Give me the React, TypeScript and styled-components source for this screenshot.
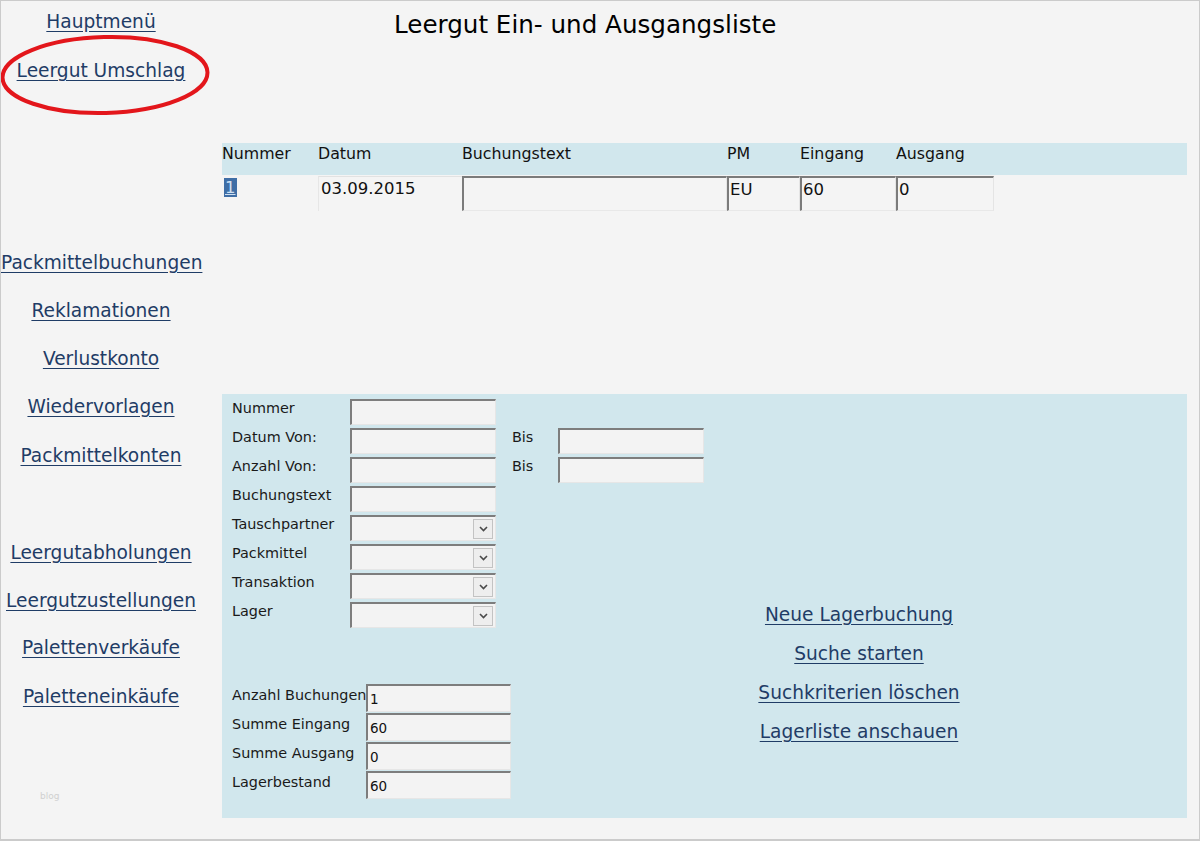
import styled, { createGlobalStyle } from "styled-components";

const GlobalStyle = createGlobalStyle`
    html, body {
        margin: 0;
        padding: 0;
        background: #f4f4f4;
    }
    body {
        font-family: "DejaVu Sans", Verdana, sans-serif;
        color: #111;
    }
`;

const Page = styled.div`
    position: relative;
    display: flex;
    width: 1200px;
    height: 841px;
    box-sizing: border-box;
    border: 1px solid #cbcbcb;
    border-bottom-width: 2px;
    background: #f4f4f4;
    overflow: hidden;
`;

const Nav = styled.nav`
    position: relative;
    display: flex;
    flex-direction: column;
    width: 200px;
    margin-right: 21px;
    padding-top: 10px;
`;

const NavLink = styled.a<{ $gap?: number }>`
    display: block;
    margin-top: ${(p) => p.$gap ?? 26}px;
    font-size: 18.6px;
    line-height: 22px;
    text-align: center;
    color: #1f3c66;
    text-decoration: underline;
    text-underline-offset: 3px;
    white-space: nowrap;
    cursor: pointer;
`;

const Circle = styled.svg`
    position: absolute;
    left: -1px;
    top: 33px;
    pointer-events: none;
`;

const Watermark = styled.div`
    position: absolute;
    left: 39px;
    top: 790px;
    font-size: 9px;
    color: #d0d0d0;
`;

const Main = styled.main`
    display: flex;
    flex-direction: column;
    width: 965px;
`;

const Title = styled.h1`
    margin: 9px 0 0 172px;
    font-size: 24.6px;
    line-height: 29px;
    font-weight: normal;
    color: #000;
`;

const Columns = "96px 144px 265px 73px 96px 98px";

const HeaderBand = styled.div`
    display: grid;
    grid-template-columns: ${Columns};
    height: 32px;
    margin-top: 104px;
    background: #d1e7ed;
`;

const HeadCell = styled.div`
    padding: 1px 0 0 0;
    font-size: 15.8px;
    line-height: 19px;
`;

const DataRow = styled.div`
    display: grid;
    grid-template-columns: ${Columns};
    height: 35px;
    margin-top: 1px;
`;

const Cell = styled.div<{ $variant: "plain" | "faint" | "inset" }>`
    box-sizing: border-box;
    padding: 2px 0 0 ${(p) => (p.$variant === "inset" ? 1 : 2)}px;
    font-size: 16.5px;
    line-height: 20px;
    background: #f4f4f4;
    border-top: ${(p) =>
        p.$variant === "inset" ? "2px solid #7b7b7b" : p.$variant === "faint" ? "1px solid #e2e2e2" : "none"};
    border-left: ${(p) =>
        p.$variant === "inset" ? "2px solid #7b7b7b" : p.$variant === "faint" ? "1px solid #e6e6e6" : "none"};
    border-right: ${(p) => (p.$variant === "inset" ? "1px solid #e4e4e4" : "none")};
    border-bottom: ${(p) => (p.$variant === "inset" ? "1px solid #e8e8e8" : "none")};
`;

const Selected = styled.span`
    background: #3f6ea6;
    color: #cfe0f2;
    text-decoration: underline;
    padding: 0 1px;
`;

const Panel = styled.section`
    display: flex;
    height: 424px;
    margin-top: 183px;
    background: #d1e7ed;
`;

const LeftCol = styled.div`
    width: 480px;
    padding: 5px 0 0 10px;
`;

const FormGrid = styled.div`
    display: grid;
    grid-template-columns: 118px 146px 62px 146px;
    grid-auto-rows: 26px;
    row-gap: 3px;
    align-items: start;
`;

const Label = styled.label<{ $indent?: number }>`
    padding: 1px 0 0 ${(p) => p.$indent ?? 0}px;
    font-size: 14.4px;
    line-height: 17px;
    white-space: nowrap;
    color: #1a1a1a;
`;

const Field = styled.input<{ $small?: boolean }>`
    box-sizing: border-box;
    width: 100%;
    height: 100%;
    margin: 0;
    padding: 0 0 0 2px;
    font-family: "DejaVu Sans", Verdana, sans-serif;
    font-size: ${(p) => (p.$small ? 13.5 : 14)}px;
    color: #111;
    background: #f3f3f3;
    border-style: solid;
    border-color: #7d7d7d #e6e6e6 #e6e6e6 #7d7d7d;
    border-width: 2px 1px 1px 2px;
    outline: none;
`;

const SelectBox = styled.div`
    box-sizing: border-box;
    display: flex;
    justify-content: flex-end;
    align-items: center;
    height: 100%;
    padding-right: 2px;
    background: #f3f3f3;
    border-style: solid;
    border-color: #7d7d7d #e6e6e6 #e6e6e6 #7d7d7d;
    border-width: 2px 1px 1px 2px;
`;

const ArrowBox = styled.div`
    display: flex;
    align-items: center;
    justify-content: center;
    width: 20px;
    height: 20px;
    box-sizing: border-box;
    background: #eeeeee;
    border: 1px solid #c3c3c3;
`;

const SummaryGrid = styled.div`
    display: grid;
    grid-template-columns: 134px 145px;
    grid-auto-rows: 28px;
    row-gap: 1px;
    margin-top: 56px;
    align-items: start;
`;

const SummaryLabel = styled(Label)`
    padding-top: 3px;
`;

const RightCol = styled.div`
    display: flex;
    flex-direction: column;
    align-items: center;
    width: 294px;
    padding-top: 210px;
`;

const ActionLink = styled(NavLink)`
    margin-top: ${(p) => p.$gap ?? 17}px;
`;

function Chevron() {
    return (
        <svg width="9" height="6" viewBox="0 0 9 6">
            <path d="M1 1 L4.5 4.5 L8 1" fill="none" stroke="#4a4a4a" strokeWidth="1.6" />
        </svg>
    );
}

function Select() {
    return (
        <SelectBox>
            <ArrowBox>
                <Chevron />
            </ArrowBox>
        </SelectBox>
    );
}

const navItems: { text: string; gap: number }[] = [
    { text: "Packmittelbuchungen", gap: 170 },
    { text: "Reklamationen", gap: 26 },
    { text: "Verlustkonto", gap: 26 },
    { text: "Wiedervorlagen", gap: 26 },
    { text: "Packmittelkonten", gap: 27 },
    { text: "Leergutabholungen", gap: 75 },
    { text: "Leergutzustellungen", gap: 26 },
    { text: "Palettenverkäufe", gap: 25 },
    { text: "Paletteneinkäufe", gap: 27 },
];

const summary = [
    { label: "Anzahl Buchungen", value: "1" },
    { label: "Summe Eingang", value: "60" },
    { label: "Summe Ausgang", value: "0" },
    { label: "Lagerbestand", value: "60" },
];

const actions = ["Neue Lagerbuchung", "Suche starten", "Suchkriterien löschen", "Lagerliste anschauen"];

function App() {
    return (
        <>
            <GlobalStyle />
            <Page>
                <Nav>
                    <NavLink $gap={0}>Hauptmenü</NavLink>
                    <NavLink $gap={27}>Leergut Umschlag</NavLink>
                    {navItems.map((n) => (
                        <NavLink key={n.text} $gap={n.gap}>
                            {n.text}
                        </NavLink>
                    ))}
                    <Circle width="212" height="84" viewBox="0 0 212 84">
                        <ellipse cx="105" cy="41" rx="102.5" ry="38" fill="none" stroke="#e3161b" strokeWidth="4" transform="rotate(-1.5 105 41)" />
                    </Circle>
                    <Watermark>blog</Watermark>
                </Nav>
                <Main>
                    <Title>Leergut Ein- und Ausgangsliste</Title>
                    <HeaderBand>
                        <HeadCell>Nummer</HeadCell>
                        <HeadCell>Datum</HeadCell>
                        <HeadCell>Buchungstext</HeadCell>
                        <HeadCell>PM</HeadCell>
                        <HeadCell>Eingang</HeadCell>
                        <HeadCell>Ausgang</HeadCell>
                    </HeaderBand>
                    <DataRow>
                        <Cell $variant="plain">
                            <Selected>1</Selected>
                        </Cell>
                        <Cell $variant="faint">03.09.2015</Cell>
                        <Cell $variant="inset"></Cell>
                        <Cell $variant="inset">EU</Cell>
                        <Cell $variant="inset">60</Cell>
                        <Cell $variant="inset">0</Cell>
                    </DataRow>
                    <Panel>
                        <LeftCol>
                            <FormGrid>
                                <Label>Nummer</Label>
                                <Field readOnly value="" />
                                <span />
                                <span />
                                <Label>Datum Von:</Label>
                                <Field readOnly value="" />
                                <Label $indent={16}>Bis</Label>
                                <Field readOnly value="" />
                                <Label>Anzahl Von:</Label>
                                <Field readOnly value="" />
                                <Label $indent={16}>Bis</Label>
                                <Field readOnly value="" />
                                <Label>Buchungstext</Label>
                                <Field readOnly value="" />
                                <span />
                                <span />
                                <Label>Tauschpartner</Label>
                                <Select />
                                <span />
                                <span />
                                <Label>Packmittel</Label>
                                <Select />
                                <span />
                                <span />
                                <Label>Transaktion</Label>
                                <Select />
                                <span />
                                <span />
                                <Label>Lager</Label>
                                <Select />
                            </FormGrid>
                            <SummaryGrid>
                                {summary.map((s) => (
                                    <>
                                        <SummaryLabel key={s.label}>{s.label}</SummaryLabel>
                                        <Field key={s.label + "v"} $small readOnly value={s.value} />
                                    </>
                                ))}
                            </SummaryGrid>
                        </LeftCol>
                        <RightCol>
                            {actions.map((a, i) => (
                                <ActionLink key={a} $gap={i === 0 ? 0 : 17}>
                                    {a}
                                </ActionLink>
                            ))}
                        </RightCol>
                    </Panel>
                </Main>
            </Page>
        </>
    );
}

export default App;
